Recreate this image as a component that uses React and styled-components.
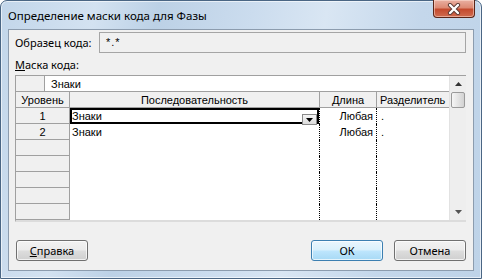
import React from "react";
import styled, { createGlobalStyle } from "styled-components";

const GlobalStyle = createGlobalStyle`
  html, body {
    margin: 0;
    padding: 0;
    background: #ffffff;
  }
  * {
    box-sizing: border-box;
  }
`;

const Window = styled.div`
  width: 482px;
  height: 279px;
  display: flex;
  flex-direction: column;
  padding: 0 7px 7px 7px;
  border: 1px solid #4a6684;
  border-radius: 7px 7px 0 0;
  background: linear-gradient(
    100deg,
    #c2d6ea 0%,
    #d3e2f1 18%,
    #bcd1e6 30%,
    #cbdcee 48%,
    #d9e6f3 62%,
    #c4d7eb 80%,
    #bed3e8 100%
  );
  box-shadow: inset 0 0 0 1px rgba(255, 255, 255, 0.6);
  font-family: "Liberation Sans", Arial, sans-serif;
`;

const TitleBar = styled.div`
  height: 28px;
  display: flex;
  justify-content: space-between;
  align-items: flex-start;
`;

const Title = styled.div`
  padding-top: 7px;
  font-family: "Noto Sans", "Liberation Sans", sans-serif;
  font-size: 11.5px;
  color: #000;
`;

const CloseButton = styled.div`
  width: 42px;
  height: 18px;
  margin-top: -1px;
  margin-right: -1px;
  border: 1px solid #5a2518;
  border-top: none;
  border-radius: 0 0 4px 4px;
  background: linear-gradient(
    180deg,
    #e9b0a2 0%,
    #dd8a74 45%,
    #c44a2e 55%,
    #cf6c50 100%
  );
  box-shadow: inset 0 0 0 1px rgba(255, 230, 220, 0.5);
  display: flex;
  align-items: center;
  justify-content: center;
`;

const Client = styled.div`
  flex: 1;
  display: flex;
  flex-direction: column;
  background: #f0f0f0;
  border: 1px solid #8c9cae;
  padding: 2px 7px 0 6px;
  font-size: 11px;
  color: #000;
`;

const FieldRow = styled.div`
  display: flex;
  align-items: center;
  height: 21px;
`;

const Label = styled.div`
  width: 84px;
  font-family: "Noto Sans", "Liberation Sans", sans-serif;
  font-size: 11px;
`;

const SampleBox = styled.div`
  flex: 1;
  height: 21px;
  border: 1px solid #a5a5a5;
  background: #f0f0f0;
  padding: 3px 0 0 6px;
  font-size: 11px;
  letter-spacing: 1px;
`;

const MaskLabel = styled.div`
  height: 22px;
  padding-top: 4px;
  font-family: "Noto Sans", "Liberation Sans", sans-serif;
  font-size: 11px;

  u {
    text-decoration: underline;
  }
`;

const Table = styled.div`
  display: flex;
  height: 147px;
  margin-right: 0;
  border-top: 1px solid #a0a0a0;
  border-left: 1px solid #a0a0a0;
  border-bottom: 2px solid #dcdcdc;
  background: #fff;
`;

const TableBody = styled.div`
  flex: 1;
  display: flex;
  flex-direction: column;
  overflow: hidden;
`;

const Row = styled.div`
  display: flex;
  height: ${(p) => p.$h || 16}px;
  flex-shrink: 0;
`;

const GrayCell = styled.div`
  width: ${(p) => p.$w}px;
  flex-shrink: 0;
  background: #f0f0f0;
  border-right: 1px solid #a0a0a0;
  border-bottom: 1px solid #a0a0a0;
  display: flex;
  align-items: center;
  justify-content: ${(p) => p.$align || "center"};
  padding-left: ${(p) => p.$pl || 0}px;
  white-space: nowrap;
`;

const MaskValue = styled.div`
  flex: 1;
  border-bottom: 1px solid #a0a0a0;
  display: flex;
  align-items: center;
  padding-left: 6px;
`;

const DataCell = styled.div`
  width: ${(p) => p.$w}px;
  flex-shrink: 0;
  position: relative;
  display: flex;
  align-items: center;
  justify-content: ${(p) => p.$align || "flex-start"};
  padding: 0 ${(p) => (p.$align === "flex-end" ? 3 : 0)}px 0
    ${(p) => p.$pl || 2}px;
  border-right: ${(p) => (p.$dotted ? "1px dotted #000" : "none")};
  box-shadow: ${(p) => (p.$selected ? "inset 0 0 0 2px #000" : "none")};
`;

const DropButton = styled.div`
  position: absolute;
  right: 2px;
  top: 6px;
  width: 15px;
  height: 11px;
  border: 1px solid #8a8a8a;
  background: linear-gradient(180deg, #f4f4f4 0%, #dcdcdc 100%);
  display: flex;
  align-items: center;
  justify-content: center;
`;

const Scrollbar = styled.div`
  width: 17px;
  display: flex;
  flex-direction: column;
  background: #eeeeee;
  border-left: 1px solid #e2e2e2;
`;

const ArrowBox = styled.div`
  height: 16px;
  display: flex;
  align-items: center;
  justify-content: center;
`;

const Thumb = styled.div`
  height: 16px;
  margin: 0 1px;
  border: 1px solid #9a9a9a;
  border-radius: 2px;
  background: linear-gradient(90deg, #f6f6f6 0%, #e4e4e4 50%, #d2d2d2 100%);
`;

const Track = styled.div`
  flex: 1;
`;

const ButtonRow = styled.div`
  display: flex;
  align-items: center;
  padding-top: 18px;
  padding-left: 1px;
`;

const Spacer = styled.div`
  flex: 1;
`;

const Button = styled.div`
  width: 72px;
  height: 21px;
  margin-left: ${(p) => p.$ml || 0}px;
  border: 1px solid ${(p) => (p.$default ? "#3c7fb1" : "#707070")};
  border-radius: 3px;
  background: ${(p) =>
    p.$default
      ? "linear-gradient(180deg, #eaf6fd 0%, #d9f0fc 48%, #bee6fd 52%, #a7d9f5 100%)"
      : "linear-gradient(180deg, #f2f2f2 0%, #ebebeb 48%, #dddddd 52%, #cfcfcf 100%)"};
  box-shadow: inset 0 0 0 1px rgba(255, 255, 255, 0.7);
  display: flex;
  align-items: center;
  justify-content: center;
  font-family: "Noto Sans", "Liberation Sans", sans-serif;
  font-size: 11px;

  u {
    text-decoration: underline;
  }
`;

const rows = [
  { n: "1", seq: "Знаки", len: "Любая", sep: "." },
  { n: "2", seq: "Знаки", len: "Любая", sep: "." },
  {},
  {},
  {},
  {},
  {},
];

function DownTriangle({ color = "#000" }) {
  return (
    <svg width="7" height="4" viewBox="0 0 7 4">
      <path d="M0 0 H7 L3.5 4 Z" fill={color} />
    </svg>
  );
}

export default function App() {
  return (
    <>
      <GlobalStyle />
      <Window>
        <TitleBar>
          <Title>Определение маски кода для Фазы</Title>
          <CloseButton>
            <svg width="14" height="12" viewBox="0 0 14 12">
              <path
                d="M3 2 L11 10 M11 2 L3 10"
                stroke="#5a3a34"
                strokeWidth="4.2"
                strokeLinecap="round"
              />
              <path
                d="M3 2 L11 10 M11 2 L3 10"
                stroke="#ffffff"
                strokeWidth="2.4"
                strokeLinecap="round"
              />
            </svg>
          </CloseButton>
        </TitleBar>
        <Client>
          <FieldRow>
            <Label>Образец кода:</Label>
            <SampleBox>*.*</SampleBox>
          </FieldRow>
          <MaskLabel>
            <u>М</u>аска кода:
          </MaskLabel>
          <Table>
            <TableBody>
              <Row>
                <GrayCell $w={29} />
                <MaskValue>Знаки</MaskValue>
              </Row>
              <Row>
                <GrayCell $w={54}>Уровень</GrayCell>
                <GrayCell $w={250}>Последовательность</GrayCell>
                <GrayCell $w={57}>Длина</GrayCell>
                <GrayCell $w={75} $align="flex-start" $pl={3}>
                  Разделитель
                </GrayCell>
              </Row>
              {rows.map((r, i) => (
                <Row key={i}>
                  <GrayCell $w={54}>{r.n}</GrayCell>
                  <DataCell $w={250} $dotted $selected={i === 0}>
                    {r.seq}
                    {i === 0 && (
                      <DropButton>
                        <DownTriangle />
                      </DropButton>
                    )}
                  </DataCell>
                  <DataCell $w={57} $dotted $align="flex-end">
                    {r.len}
                  </DataCell>
                  <DataCell $w={75} $pl={4}>
                    {r.sep}
                  </DataCell>
                </Row>
              ))}
            </TableBody>
            <Scrollbar>
              <ArrowBox>
                <svg width="7" height="4" viewBox="0 0 7 4">
                  <path d="M0 4 H7 L3.5 0 Z" fill="#333" />
                </svg>
              </ArrowBox>
              <Thumb />
              <Track />
              <ArrowBox>
                <DownTriangle color="#555" />
              </ArrowBox>
            </Scrollbar>
          </Table>
          <ButtonRow>
            <Button>
              <u>С</u>правка
            </Button>
            <Spacer />
            <Button $default>ОК</Button>
            <Button $ml={11}>Отмена</Button>
          </ButtonRow>
        </Client>
      </Window>
    </>
  );
}
